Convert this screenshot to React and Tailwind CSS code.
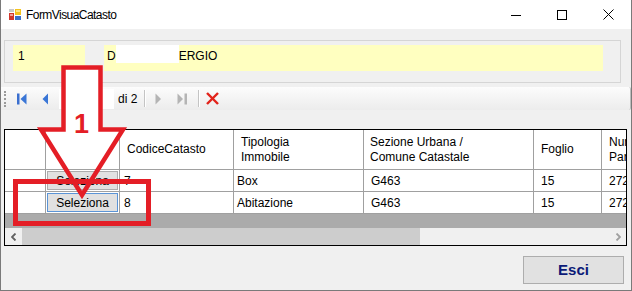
import React from "react";

const F = { fontFamily: "'Liberation Sans', Arial, sans-serif" };

function TitleIcon() {
  return (
    <svg width="12" height="12" viewBox="0 0 12 12">
      <rect x="0" y="4" width="5" height="7" fill="#d0352b" />
      <rect x="1" y="5" width="3" height="2" fill="#f3a09a" />
      <rect x="6" y="0" width="6" height="6" fill="#f4c21c" />
      <rect x="7" y="1" width="4" height="2" fill="#fde68a" />
      <rect x="6" y="7" width="6" height="4" fill="#3b6fc9" />
      <rect x="0" y="0" width="5" height="3" fill="#c9c9c9" />
    </svg>
  );
}

function Cell({ w, children, className = "" }) {
  return (
    <div className={`shrink-0 border-r border-[#a0a0a0] h-full flex items-center overflow-hidden whitespace-nowrap ${w} ${className}`}>
      {children}
    </div>
  );
}

function Row({ focused, code }) {
  return (
    <div className="flex h-[22px] border-b border-[#a0a0a0] bg-white text-[12px] text-black">
      <Cell w="w-[41px]">
        {focused ? <div className="ml-[11px] mt-[2px] w-[2px] h-[1px] bg-[#333]" /> : null}
      </Cell>
      <Cell w="w-[74px]" className="px-[1px] py-[1px]">
        <div
          className={`w-full h-full flex items-center justify-center bg-[#e1e1e1] border ${
            focused ? "border-[#5b94d6]" : "border-[#adadad]"
          }`}
        >
          Seleziona
        </div>
      </Cell>
      <Cell w="w-[114px]" className="pl-[4px]">{code}</Cell>
      <Cell w="w-[130px]" className="pl-[3px]">{code === "7" ? "Box" : "Abitazione"}</Cell>
      <Cell w="w-[170px]" className="pl-[7px]">G463</Cell>
      <Cell w="w-[68px]" className="pl-[7px]">15</Cell>
      <Cell w="w-[60px]" className="pl-[7px] border-r-0">272</Cell>
    </div>
  );
}

export default function App() {
  return (
    <div
      className="relative w-[632px] h-[291px] bg-[#f0f0f0] border-l border-r border-b border-[#7a7a7a] overflow-hidden flex flex-col"
      style={F}
    >
      {/* Title bar */}
      <div className="h-[29px] shrink-0 bg-white flex items-center">
        <div className="ml-[8px] mt-[1px]">
          <TitleIcon />
        </div>
        <div className="ml-[5px] text-[12px] tracking-[-0.55px] text-black">FormVisuaCatasto</div>
        <div className="ml-auto flex h-full">
          <div className="w-[46px] h-full flex items-center justify-center">
            <svg width="10" height="10" viewBox="0 0 10 10">
              <line x1="0" y1="5.5" x2="10" y2="5.5" stroke="#000" strokeWidth="1" />
            </svg>
          </div>
          <div className="w-[46px] h-full flex items-center justify-center">
            <svg width="10" height="10" viewBox="0 0 10 10">
              <rect x="0.5" y="0.5" width="9" height="9" fill="none" stroke="#000" strokeWidth="1" />
            </svg>
          </div>
          <div className="w-[46px] h-full flex items-center justify-center">
            <svg width="11" height="11" viewBox="0 0 11 11">
              <line x1="0.5" y1="0.5" x2="10.5" y2="10.5" stroke="#000" strokeWidth="1" />
              <line x1="10.5" y1="0.5" x2="0.5" y2="10.5" stroke="#000" strokeWidth="1" />
            </svg>
          </div>
        </div>
      </div>
      <div className="h-px bg-[#f0f0f0]" />

      {/* Group box */}
      <div className="ml-[3px] mt-[10px] w-[617px] h-[43px] border border-[#d5d5d5] flex pt-[4px] shrink-0">
        <div className="ml-[8px] w-[72px] h-[26px] bg-[#ffffc0] text-[12px] pl-[5px] pt-[2px]">1</div>
        <div className="ml-[19px] w-[499px] h-[26px] bg-[#ffffc0] text-[12px] pl-[3px] pt-[2px] flex items-start">
          <span>D</span>
          <span className="inline-block w-[63px] h-[18px] bg-white -mt-[2px]" />
          <span>ERGIO</span>
        </div>
      </div>

      {/* Toolbar */}
      <div className="mt-[4px] h-[23px] shrink-0 w-[630px] bg-gradient-to-b from-[#fcfcfc] to-[#ececec] border-r border-[#bdbdbd] rounded-r-[2px] flex items-center text-[12px]">
        <div className="ml-[3px] w-[2px] h-[16px] border-l-2 border-dotted border-[#9a9a9a]" />
        <svg className="ml-[11px]" width="10" height="12" viewBox="0 0 10 12">
          <rect x="0" y="0.5" width="2.5" height="11" fill="#3a6fcf" />
          <polygon points="9.5,0.5 9.5,11.5 3.5,6" fill="#3a76d6" />
        </svg>
        <svg className="ml-[15px]" width="7" height="12" viewBox="0 0 7 12">
          <polygon points="6,0.5 6,11.5 0.5,6" fill="#3a76d6" />
        </svg>
        <div className="ml-[10px] w-[55px] h-[20px] bg-white" />
        <div className="ml-[4px] text-black">di 2</div>
        <div className="ml-[7px] w-px h-[17px] bg-[#c4c4c4] border-r border-white box-content" />
        <svg className="ml-[9px]" width="7" height="12" viewBox="0 0 7 12">
          <polygon points="0.5,0.5 0.5,11.5 6,6" fill="#b4b4b4" />
        </svg>
        <svg className="ml-[15px]" width="10" height="12" viewBox="0 0 10 12">
          <polygon points="0.5,0.5 0.5,11.5 6,6" fill="#b4b4b4" />
          <rect x="7.5" y="0.5" width="2.5" height="11" fill="#b4b4b4" />
        </svg>
        <div className="ml-[11px] w-px h-[17px] bg-[#c4c4c4] border-r border-white box-content" />
        <svg className="ml-[6px]" width="13" height="13" viewBox="0 0 13 13">
          <line x1="1" y1="1" x2="12" y2="12" stroke="#e2231a" strokeWidth="2.4" />
          <line x1="12" y1="1" x2="1" y2="12" stroke="#e2231a" strokeWidth="2.4" />
        </svg>
      </div>

      {/* Grid */}
      <div className="ml-[3px] mt-[19px] w-[623px] h-[117px] shrink-0 border border-black bg-[#ababab] flex flex-col overflow-hidden">
        <div className="flex h-[40px] shrink-0 border-b border-[#a0a0a0] bg-white text-[12px] leading-[15px] text-black">
          <Cell w="w-[41px]" />
          <Cell w="w-[74px]" />
          <Cell w="w-[114px]" className="pl-[7px]">CodiceCatasto</Cell>
          <Cell w="w-[130px]" className="pl-[7px]">
            <div>Tipologia<br />Immobile</div>
          </Cell>
          <Cell w="w-[170px]" className="pl-[6px]">
            <div>Sezione Urbana /<br />Comune Catastale</div>
          </Cell>
          <Cell w="w-[68px]" className="pl-[7px]">Foglio</Cell>
          <Cell w="w-[60px]" className="pl-[7px] border-r-0">
            <div>Numero<br />Particella</div>
          </Cell>
        </div>
        <Row code="7" />
        <Row focused code="8" />
        <div className="flex-1" />
        <div className="h-[17px] shrink-0 bg-[#f0f0f0] flex items-center">
          <div className="w-[17px] h-full flex items-center justify-center">
            <svg width="6" height="8" viewBox="0 0 6 8">
              <polyline points="4.5,0.5 1,4 4.5,7.5" fill="none" stroke="#606060" strokeWidth="1.8" />
            </svg>
          </div>
          <div className="w-[398px] h-full bg-[#cdcdcd]" />
          <div className="flex-1" />
          <div className="w-[17px] h-full flex items-center justify-center">
            <svg width="6" height="8" viewBox="0 0 6 8">
              <polyline points="1.5,0.5 5,4 1.5,7.5" fill="none" stroke="#a0a0a0" strokeWidth="1.8" />
            </svg>
          </div>
        </div>
      </div>

      {/* Esci */}
      <div className="mt-[10px] self-end mr-[7px] w-[101px] h-[28px] bg-[#e1e1e1] border border-[#adadad] flex items-center justify-center text-[15px] font-bold text-[#0b1a78]">
        Esci
      </div>

      {/* Annotation overlay */}
      <svg className="absolute left-0 top-0 pointer-events-none" width="632" height="291" viewBox="0 0 632 291">
        <rect x="62" y="67" width="38" height="66" fill="#ffffff" />
        <polygon
          points="62.5,67.5 99.5,67.5 99.5,129.5 122,129.5 81,195 40,129.5 62.5,129.5"
          fill="none"
          stroke="#e41e26"
          strokeWidth="4.5"
          strokeLinejoin="miter"
        />
        <rect x="14.5" y="181.5" width="133" height="42" fill="none" stroke="#e41e26" strokeWidth="5" />
      </svg>
      <div className="absolute left-[73px] top-[111px] text-[27px] font-bold text-[#e41e26] leading-none">1</div>
    </div>
  );
}
